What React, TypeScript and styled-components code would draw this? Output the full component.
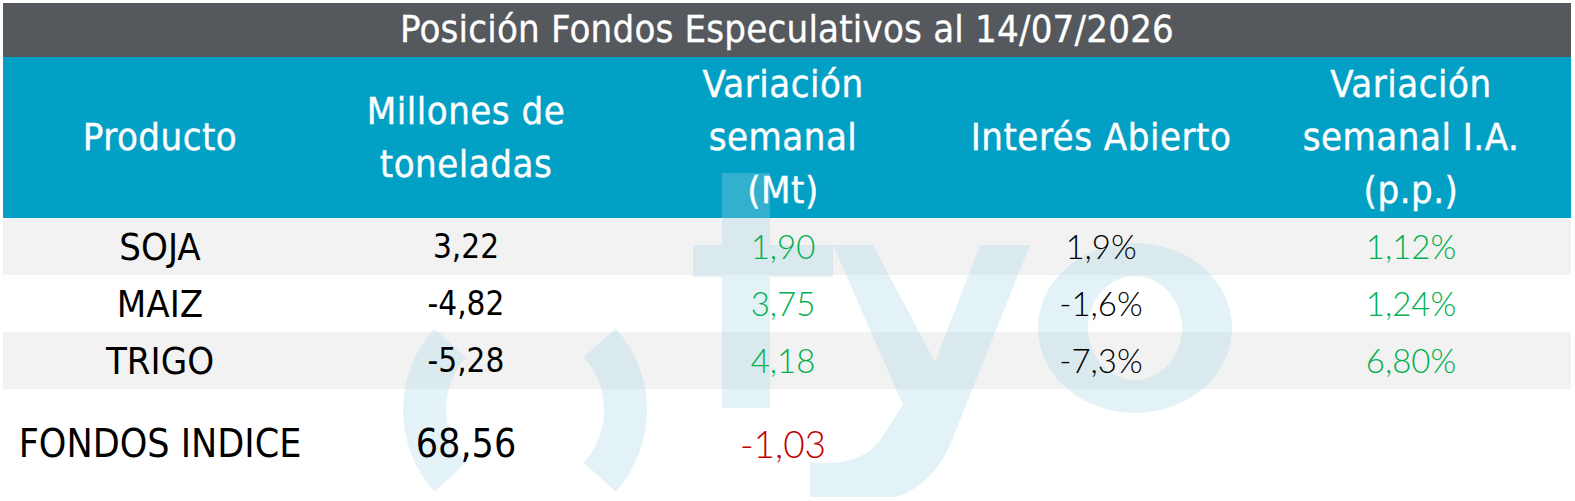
import React from "react";
import styled, { createGlobalStyle } from "styled-components";

const GlobalStyle = createGlobalStyle`
  html, body {
    margin: 0;
    padding: 0;
    background: #ffffff;
  }
  body {
    font-family: "DejaVu Sans Condensed", "DejaVu Sans", sans-serif;
  }
`;

const Page = styled.div`
  padding: 3px 4px 0 3px;
  width: 1568px;
`;

const Table = styled.div`
  position: relative;
  width: 1568px;
  font-family: "DejaVu Sans Condensed", "DejaVu Sans", sans-serif;
  font-stretch: condensed;
`;

const TitleBar = styled.div`
  height: 54px;
  background: #55585d;
  color: #ffffff;
  display: flex;
  align-items: center;
  justify-content: center;
  font-size: 38px;
  line-height: 1;
  letter-spacing: 0.2px;
  -webkit-text-stroke: 0.3px #ffffff;
  padding-bottom: 3px;
  box-sizing: border-box;
`;

const columns = "314px 298px 336px 300px 320px";

const HeaderRow = styled.div`
  display: grid;
  grid-template-columns: ${columns};
  height: 161px;
  background: #03a0c6;
`;

const HeaderCell = styled.div`
  position: relative;
  z-index: 2;
  display: flex;
  align-items: center;
  justify-content: center;
  text-align: center;
  color: #ffffff;
  font-size: 38px;
  line-height: 53px;
  letter-spacing: 0.5px;
  -webkit-text-stroke: 0.4px #ffffff;
`;

const BodyRow = styled.div<{ $shade?: boolean; $tall?: boolean }>`
  display: grid;
  grid-template-columns: ${columns};
  height: ${(p) => (p.$tall ? "108px" : "57px")};
  background: ${(p) => (p.$shade ? "#f2f2f2" : "#ffffff")};
`;

type Tone = "black" | "green" | "red";
const toneColor: Record<Tone, string> = {
  black: "#000000",
  green: "#00b050",
  red: "#c00000",
};

const Cell = styled.div<{ $tone?: Tone; $size?: number; $light?: boolean }>`
  position: relative;
  z-index: 2;
  display: flex;
  align-items: center;
  justify-content: center;
  color: ${(p) => toneColor[p.$tone || "black"]};
  font-size: ${(p) => p.$size || 38}px;
  font-family: ${(p) =>
    p.$light
      ? '"Lato", "Open Sans", sans-serif'
      : '"DejaVu Sans Condensed", "DejaVu Sans", sans-serif'};
  font-weight: ${(p) => (p.$light ? 300 : 400)};
  line-height: 1;
  white-space: nowrap;
`;

const Watermark = styled.svg`
  position: absolute;
  left: 0;
  top: 0;
  width: 1568px;
  height: 498px;
  z-index: 1;
  pointer-events: none;
`;

type Row = {
  name: string;
  mt: string;
  varMt: string;
  varTone: Tone;
  ia: string;
  iaVar: string;
};

const rows: Row[] = [
  { name: "SOJA", mt: "3,22", varMt: "1,90", varTone: "green", ia: "1,9%", iaVar: "1,12%" },
  { name: "MAIZ", mt: "-4,82", varMt: "3,75", varTone: "green", ia: "-1,6%", iaVar: "1,24%" },
  { name: "TRIGO", mt: "-5,28", varMt: "4,18", varTone: "green", ia: "-7,3%", iaVar: "6,80%" },
];

const WatermarkArt: React.FC = () => (
  <Watermark viewBox="3 3 1568 498" aria-hidden="true">
    <g fill="#a6d6e6" stroke="none" opacity="0.3">
      <path
        d="M 450.3 342.8 A 100.5 100.5 0 0 0 450.3 477.2"
        fill="none"
        stroke="#a6d6e6"
        strokeWidth="43"
      />
      <path
        d="M 599.7 342.8 A 100.5 100.5 0 0 1 599.7 477.2"
        fill="none"
        stroke="#a6d6e6"
        strokeWidth="43"
      />
      <path d="M 722 173 L 770 173 L 770 245 L 833 245 L 833 277 L 770 277 L 770 408 L 722 408 L 722 277 L 693 277 L 693 245 L 722 245 Z" />
      <path d="M 833 245 L 873 245 L 935 362 L 980 245 L 1030 245 L 950 445 Q 925 500 868 502 L 810 502 L 810 462 Q 860 468 880 440 L 903 405 Z" />
      <path
        fillRule="evenodd"
        d="M 1038 328 A 97 85 0 1 0 1232 328 A 97 85 0 1 0 1038 328 Z M 1088 328 A 47 52 0 1 0 1182 328 A 47 52 0 1 0 1088 328 Z"
      />
    </g>
  </Watermark>
);

export default function App() {
  return (
    <>
      <GlobalStyle />
      <Page>
        <Table>
          <TitleBar>Posición Fondos Especulativos al 14/07/2026</TitleBar>
          <HeaderRow>
            <HeaderCell>Producto</HeaderCell>
            <HeaderCell>
              Millones de
              <br />
              toneladas
            </HeaderCell>
            <HeaderCell>
              Variación
              <br />
              semanal
              <br />
              (Mt)
            </HeaderCell>
            <HeaderCell>Interés Abierto</HeaderCell>
            <HeaderCell>
              Variación
              <br />
              semanal I.A.
              <br />
              (p.p.)
            </HeaderCell>
          </HeaderRow>
          {rows.map((r, i) => (
            <BodyRow key={r.name} $shade={i % 2 === 0}>
              <Cell>{r.name}</Cell>
              <Cell $size={33}>{r.mt}</Cell>
              <Cell $size={33} $light $tone={r.varTone}>
                {r.varMt}
              </Cell>
              <Cell $size={33} $light>
                {r.ia}
              </Cell>
              <Cell $size={33} $light $tone="green">
                {r.iaVar}
              </Cell>
            </BodyRow>
          ))}
          <BodyRow $tall>
            <Cell $size={39}>FONDOS INDICE</Cell>
            <Cell $size={39}>68,56</Cell>
            <Cell $size={37} $light $tone="red">
              -1,03
            </Cell>
            <Cell />
            <Cell />
          </BodyRow>
          <WatermarkArt />
        </Table>
      </Page>
    </>
  );
}
